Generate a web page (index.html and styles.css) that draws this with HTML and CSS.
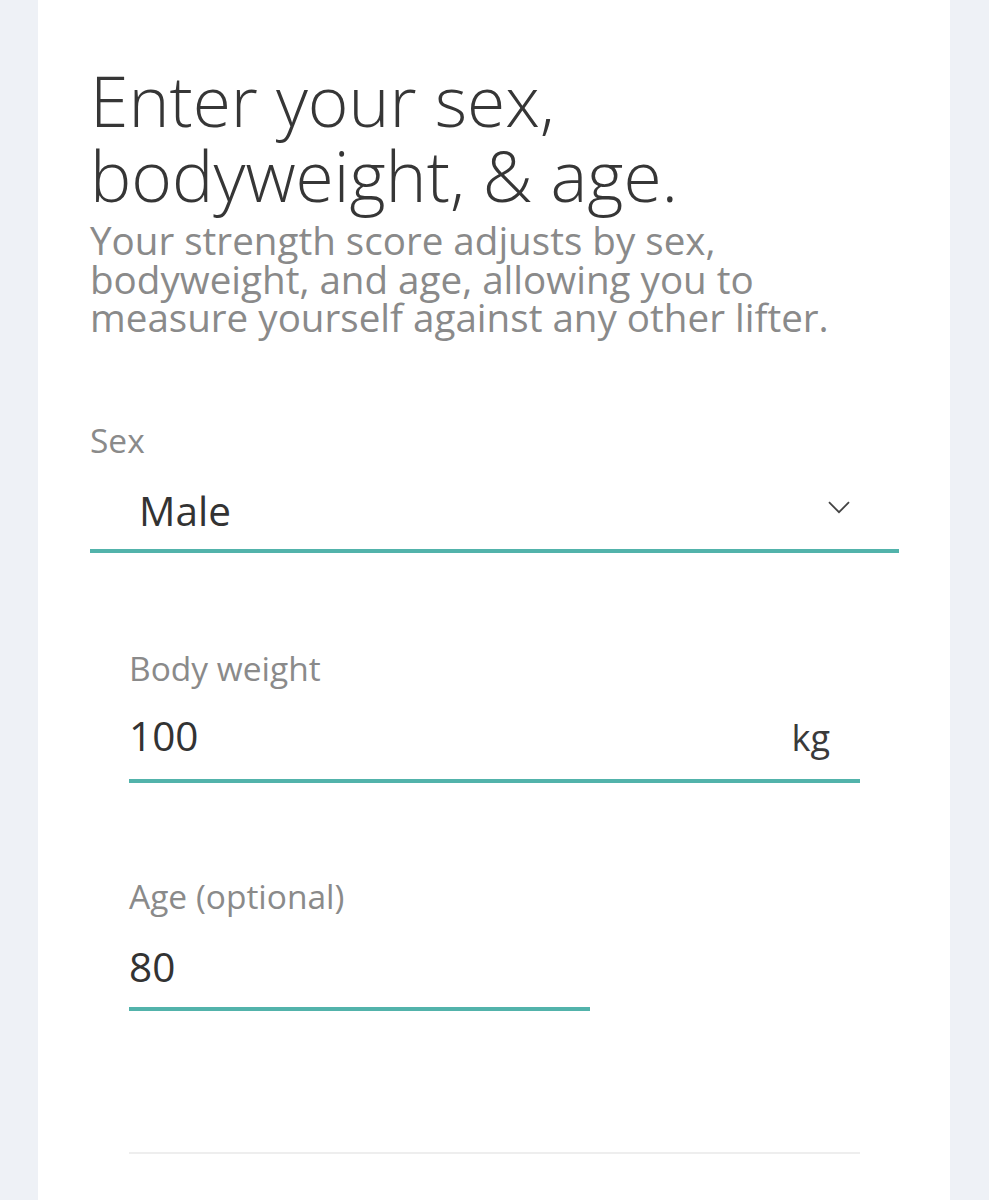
FILE: index.html
```html
<!DOCTYPE html>
<html lang="en">
<head>
<meta charset="utf-8">
<title>Strength score</title>
<link rel="stylesheet" href="styles.css">
</head>
<body>
<main class="card">
  <h1 class="title">Enter your sex,<br>bodyweight, &amp; age.</h1>
  <p class="subtitle">Your strength score adjusts by sex,<br>bodyweight, and age, allowing you to<br>measure yourself against any other lifter.</p>

  <div class="field field-sex">
    <div class="label">Sex</div>
    <div class="select">
      <span class="value">Male</span>
      <svg class="chevron" width="22" height="13" viewBox="0 0 22 13" aria-hidden="true"><path d="M1 1.2 L11 11.2 L21 1.2" fill="none" stroke="#444" stroke-width="1.8"/></svg>
    </div>
  </div>

  <div class="group">
    <div class="field field-weight">
      <div class="label">Body weight</div>
      <div class="input">
        <span class="value">100</span>
        <span class="unit">kg</span>
      </div>
    </div>

    <div class="field field-age">
      <div class="label">Age (optional)</div>
      <div class="input">
        <span class="value">80</span>
      </div>
    </div>

    <hr class="divider">
  </div>
</main>
</body>
</html>
```

FILE: styles.css
```css
html, body {
  margin: 0;
  padding: 0;
}
body {
  background: #eef1f6;
  font-family: "Open Sans", "Noto Sans", sans-serif;
  min-height: 1200px;
}
.card {
  background: #ffffff;
  margin: 0 39px 0 38px;
  min-height: 1200px;
  padding: 63px 51px 0 52px;
  box-sizing: border-box;
}
.title {
  margin: 0;
  font-weight: 300;
  font-size: 69.5px;
  line-height: 75px;
  color: #363636;
}
.subtitle {
  margin: 8px 0 0 0;
  font-weight: 400;
  font-size: 38.6px;
  line-height: 38.5px;
  color: #8a8a8a;
}
.label {
  font-size: 33.5px;
  line-height: 36px;
  color: #8a8a8a;
}
.value {
  font-size: 40.5px;
  line-height: 48px;
  color: #333333;
}
.field-sex {
  margin-top: 85px;
}
.select {
  display: flex;
  align-items: center;
  justify-content: space-between;
  margin-top: 29px;
  padding: 0 49px 14px 49px;
  border-bottom: 4px solid #52b3ab;
}
.chevron {
  display: block;
  margin-top: -6px;
}
.group {
  padding: 0 39px;
}
.field-weight {
  margin-top: 97px;
}
.input {
  display: flex;
  align-items: baseline;
  justify-content: space-between;
  margin-top: 26px;
  padding: 0 30px 17px 0;
  border-bottom: 4px solid #52b3ab;
}
.unit {
  font-size: 36px;
  line-height: 48px;
  color: #3a3a3a;
}
.field-age {
  margin-top: 95px;
  width: 461px;
}
.field-age .input {
  margin-top: 29px;
  padding-bottom: 16px;
}
.divider {
  margin: 141px 0 0 0;
  border: 0;
  border-top: 2px solid #eeeeee;
  height: 0;
}
```
